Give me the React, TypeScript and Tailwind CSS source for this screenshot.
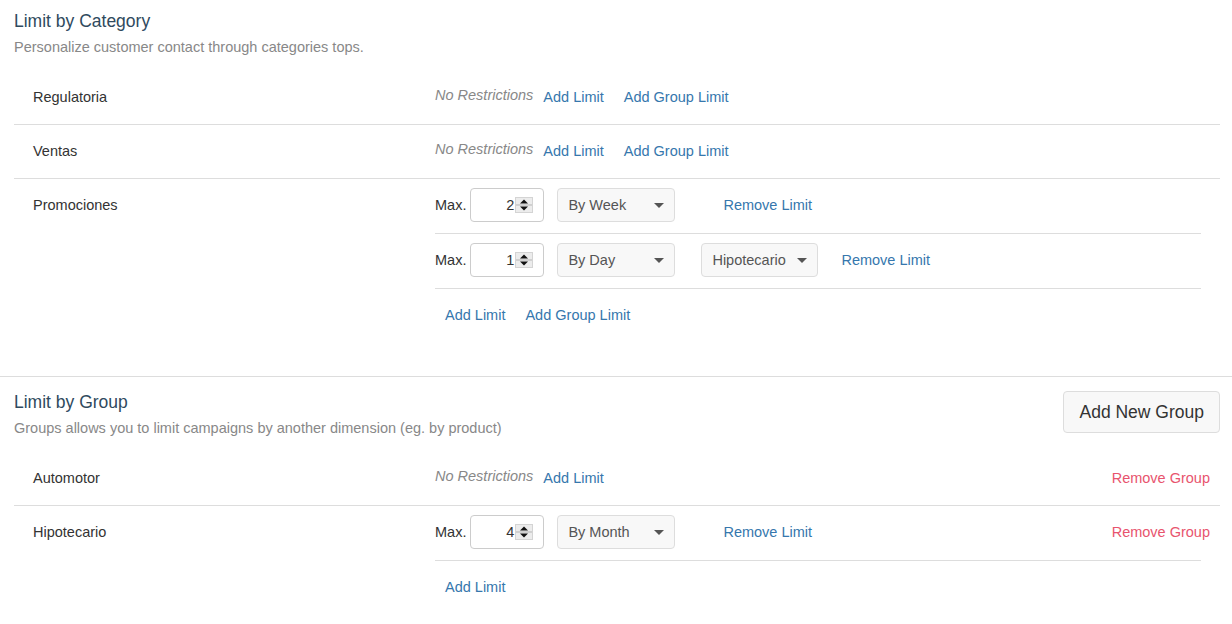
import type { ReactNode } from 'react'

type Limit = {
  max: number
  period: string
  group?: string
}

type Category = {
  name: string
  limits: Limit[]
}

const categories: Category[] = [
  { name: 'Regulatoria', limits: [] },
  { name: 'Ventas', limits: [] },
  {
    name: 'Promociones',
    limits: [
      { max: 2, period: 'By Week' },
      { max: 1, period: 'By Day', group: 'Hipotecario' },
    ],
  },
]

const groups: Category[] = [
  { name: 'Automotor', limits: [] },
  { name: 'Hipotecario', limits: [{ max: 4, period: 'By Month' }] },
]

function LinkButton({ children, danger = false }: { children: ReactNode; danger?: boolean }) {
  return (
    <button
      className={`h-[34px] px-[10px] pt-[2px] rounded-[4px] text-[14.5px] whitespace-nowrap flex items-center ${
        danger ? 'text-[#e8546e]' : 'text-[#3677ad]'
      }`}
    >
      {children}
    </button>
  )
}

function Spinner() {
  return (
    <svg width="18" height="16" viewBox="0 0 18 16" className="ml-[1px]">
      <rect x="0.5" y="0.5" width="17" height="15" fill="#ececec" stroke="#d4d4d4" />
      <line x1="1" y1="8" x2="17" y2="8" stroke="#b5b5b5" />
      <path d="M5 6.5 L9 2.5 L13 6.5 Z" fill="#111" />
      <path d="M5 9.5 L9 13.5 L13 9.5 Z" fill="#111" />
    </svg>
  )
}

function NumberBox({ value }: { value: number }) {
  return (
    <div className="w-[74px] h-[34px] border border-[#ccc] rounded-[4px] bg-white flex items-center justify-end pr-[10px] text-[14.5px] text-[#333]">
      <span className="pt-[2px]">{value}</span>
      <Spinner />
    </div>
  )
}

function SelectBox({ value, width }: { value: string; width: string }) {
  return (
    <div
      className={`${width} h-[34px] border border-[#ddd] bg-[#f8f8f8] rounded-[4px] flex items-center justify-between px-[10px] text-[14.5px] text-[#555]`}
    >
      <span className="pt-[2px]">{value}</span>
      <svg width="10" height="5" viewBox="0 0 10 5">
        <path d="M0 0 L10 0 L5 5 Z" fill="#555" />
      </svg>
    </div>
  )
}

function LimitLine({ limit }: { limit: Limit }) {
  return (
    <div className="flex items-center pt-[9px] pb-[11px] border-b border-[#ddd]">
      <span className="text-[14.5px] text-[#333] mr-[4px] pt-[1px]">Max.</span>
      <NumberBox value={limit.max} />
      <div className="ml-[13px]">
        <SelectBox value={limit.period} width="w-[118px]" />
      </div>
      {limit.group ? (
        <>
          <div className="ml-[26px]">
            <SelectBox value={limit.group} width="w-[117px]" />
          </div>
          <div className="ml-[13px]">
            <LinkButton>Remove Limit</LinkButton>
          </div>
        </>
      ) : (
        <div className="ml-[38px]">
          <LinkButton>Remove Limit</LinkButton>
        </div>
      )}
    </div>
  )
}

function LimitRow({ item, last, isGroup }: { item: Category; last: boolean; isGroup: boolean }) {
  const empty = item.limits.length === 0
  return (
    <div className={`relative flex ${last ? '' : 'border-b border-[#ddd]'}`}>
      <div className="w-[421px] shrink-0 pl-[19px] pt-[9px]">
        <div className="h-[34px] pt-[2px] flex items-center text-[14.5px] text-[#333]">{item.name}</div>
      </div>
      <div className="flex-1 pr-[19px]">
        {empty ? (
          <div className="flex items-center pt-[9px] pb-[10px]">
            <span className="italic text-[14.5px] text-[#888] mb-[2px] whitespace-nowrap">No Restrictions</span>
            <LinkButton>Add Limit</LinkButton>
            {!isGroup && <LinkButton>Add Group Limit</LinkButton>}
          </div>
        ) : (
          <>
            {item.limits.map((l, i) => (
              <LimitLine key={i} limit={l} />
            ))}
            <div className="flex items-center pt-[9px] pb-[11px]">
              <LinkButton>Add Limit</LinkButton>
              {!isGroup && <LinkButton>Add Group Limit</LinkButton>}
            </div>
          </>
        )}
      </div>
      {isGroup && (
        <div className="absolute right-0 top-[9px]">
          <LinkButton danger>Remove Group</LinkButton>
        </div>
      )}
    </div>
  )
}

export default function App() {
  return (
    <div className="w-[1232px] min-h-[624px] bg-white font-['Liberation_Sans',Arial,sans-serif]">
      {/* categories */}
      <section className="pl-[14px] pr-[12px] pt-[11px] pb-[33px]">
        <h2 className="text-[17.5px] leading-[20px] text-[#2f4a5e]">Limit by Category</h2>
        <p className="mt-[6px] text-[14.5px] leading-[20px] text-[#888]">
          Personalize customer contact through categories tops.
        </p>
        <div className="mt-[14px]">
          {categories.map((c, i) => (
            <LimitRow key={c.name} item={c} last={i === categories.length - 1} isGroup={false} />
          ))}
        </div>
      </section>

      {/* groups */}
      <section className="border-t border-[#ddd] pl-[14px] pr-[12px] pt-[14px]">
        <div className="flex justify-between items-start">
          <div className="pt-[1px]">
            <h2 className="text-[17.5px] leading-[20px] text-[#2f4a5e]">Limit by Group</h2>
            <p className="mt-[6px] text-[14.5px] leading-[20px] text-[#888]">
              Groups allows you to limit campaigns by another dimension (eg. by product)
            </p>
          </div>
          <button className="h-[42px] px-[15px] pt-[1px] border border-[#ddd] bg-[#f8f8f8] rounded-[4px] text-[17.5px] text-[#333]">
            Add New Group
          </button>
        </div>
        <div className="mt-[14px]">
          {groups.map((g, i) => (
            <LimitRow key={g.name} item={g} last={i === groups.length - 1} isGroup />
          ))}
        </div>
      </section>
    </div>
  )
}
